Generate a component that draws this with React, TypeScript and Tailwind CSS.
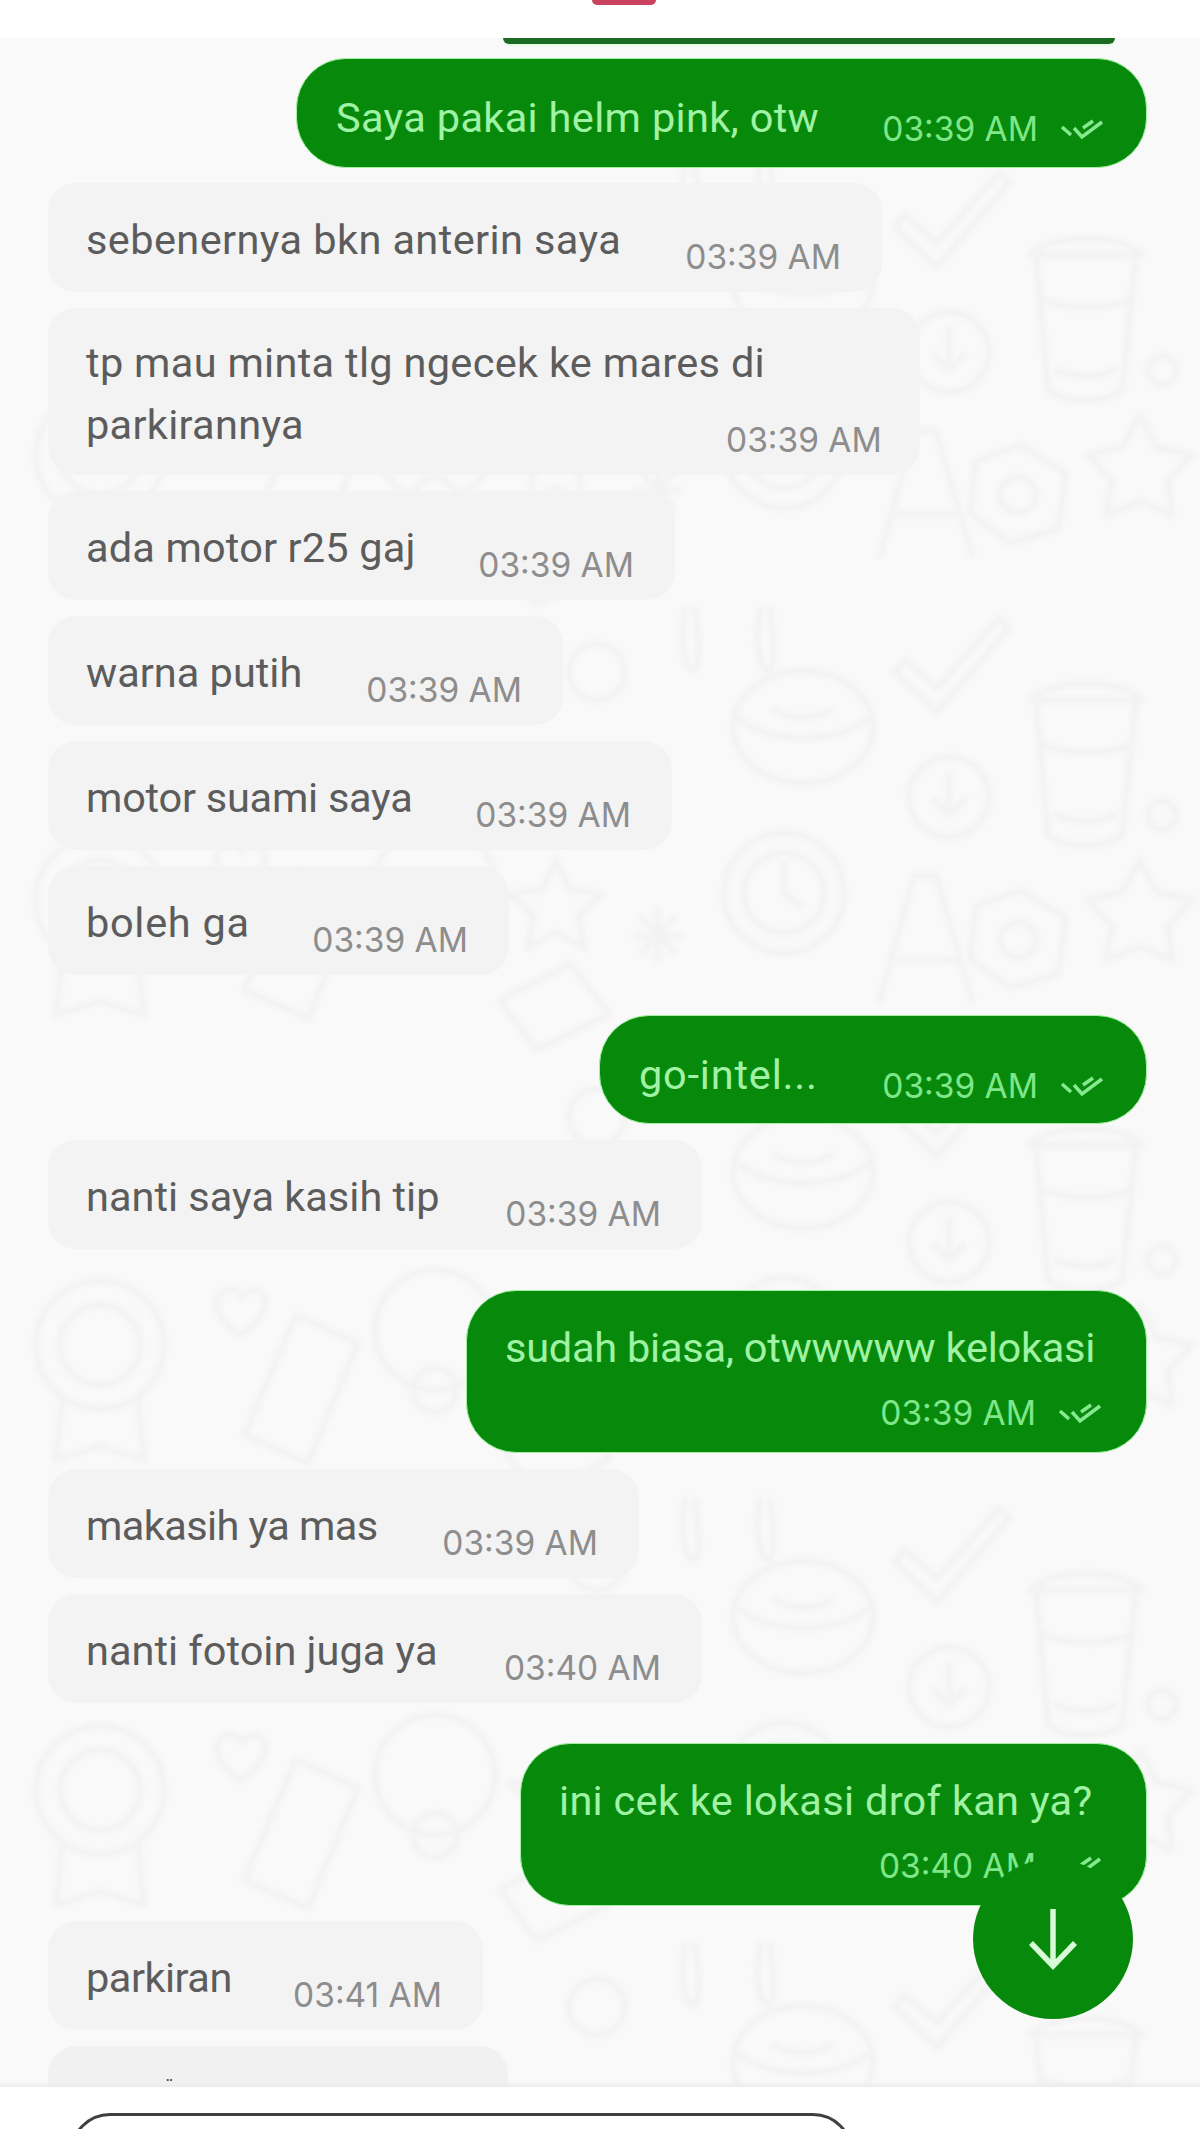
type Msg = {
  text: string;
  time: string;
  mine?: boolean;
  box: string; // width, height and top margin
  fit?: string; // per message text tweaks
  stacked?: boolean;
};

const messages: Msg[] = [
  { text: "Saya pakai helm pink, otw", time: "03:39 AM", mine: true, fit: "tracking-[0.33px]", box: "w-[851px] h-[110px] mt-[14px]" },
  { text: "sebenernya bkn anterin saya", time: "03:39 AM", fit: "tracking-[0.4px]", box: "w-[834px] h-[109px] mt-[15px]" },
  { text: "tp mau minta tlg ngecek ke mares di\nparkirannya", time: "03:39 AM", fit: "w-[640px] shrink-0 tracking-[0.3px]", box: "w-[872px] h-[167px] mt-[16px]" },
  { text: "ada motor r25 gaj", time: "03:39 AM", fit: "tracking-[0.15px]", box: "w-[627px] h-[109px] mt-[16px]" },
  { text: "warna putih", time: "03:39 AM", box: "w-[515px] h-[109px] mt-[16px]" },
  { text: "motor suami saya", time: "03:39 AM", fit: "tracking-[-0.25px]", box: "w-[624px] h-[109px] mt-[16px]" },
  { text: "boleh ga", time: "03:39 AM", fit: "tracking-[0.7px]", box: "w-[461px] h-[109px] mt-[16px]" },
  { text: "go-intel...", time: "03:39 AM", mine: true, fit: "tracking-[0.8px]", box: "w-[548px] h-[109px] mt-[40px]" },
  { text: "nanti saya kasih tip", time: "03:39 AM", box: "w-[654px] h-[109px] mt-[16px]" },
  { text: "sudah biasa, otwwwww kelokasi", time: "03:39 AM", mine: true, stacked: true, fit: "tracking-[-0.23px]", box: "w-[681px] h-[163px] mt-[41px]" },
  { text: "makasih ya mas", time: "03:39 AM", fit: "tracking-[-0.58px]", box: "w-[591px] h-[109px] mt-[16px]" },
  { text: "nanti fotoin juga ya", time: "03:40 AM", box: "w-[654px] h-[109px] mt-[16px]" },
  { text: "ini cek ke lokasi drof kan ya?", time: "03:40 AM", mine: true, stacked: true, fit: "tracking-[0.3px]", box: "w-[627px] h-[163px] mt-[40px]" },
  { text: "parkiran", time: "03:41 AM", fit: "tracking-[-0.5px]", box: "w-[435px] h-[109px] mt-[15px]" },
];

function Checks() {
  return (
    <svg viewBox="0 0 44 24" className="w-[44px] h-[24px] shrink-0" fill="none" stroke="#86e98f" strokeWidth="3.5">
      <path d="M2 10l9 8M14 11l8 9L42 5M23 11l10-7" />
    </svg>
  );
}

function Bubble({ m }: { m: Msg }) {
  if (m.mine) {
    return (
      <div
        className={`${m.box} self-end rounded-[50px] bg-[#078a0c] border border-[#a4f2a4] text-[#a0f2a4] font-['Roboto',sans-serif] ${
          m.stacked ? "flex flex-col pt-[33px] pl-[38px] pr-[44px]" : "flex items-center justify-between pl-[39px] pr-[42px]"
        }`}
      >
        <span className={`text-[41.5px] leading-[48px] ${m.fit ?? ""} ${m.stacked ? "" : "mt-[6px] -mb-[4px]"}`}>{m.text}</span>
        <span className={`flex items-center gap-[22px] ${m.stacked ? "self-end mt-[22px]" : "mt-[32px]"}`}>
          <span className="font-['Inter',sans-serif] text-[33.5px] leading-[38px] text-[#7fe68a]">{m.time}</span>
          <Checks />
        </span>
      </div>
    );
  }
  return (
    <div className={`${m.box} self-start rounded-[28px] bg-[#f3f3f3] flex items-center justify-between pl-[38px] pr-[41px] font-['Roboto',sans-serif]`}>
      <div className={`flex flex-col items-start text-[41.5px] leading-[62px] text-[#5c5c5c] mt-[4px] ${m.fit ?? ""}`}>
        {m.text.split("\n").map((line) => (
          <span key={line} className="whitespace-nowrap">
            {line}
          </span>
        ))}
      </div>
      <span className="font-['Inter',sans-serif] text-[33.5px] leading-[38px] text-[#8d8d8d] shrink-0 self-end mb-[16px]">{m.time}</span>
    </div>
  );
}

// one tile of the wallpaper, in page coordinates around y 600-1045
function DoodleTile({ dy }: { dy: number }) {
  return (
    <g transform={`translate(0 ${dy})`}>
      {/* medal */}
      <circle cx="100" cy="900" r="64" />
      <circle cx="100" cy="900" r="40" />
      <path d="M62 955l-6 60 44-14 44 14-6-60" />
      {/* phone and heart */}
      <path d="M296 870l62 28-50 120-64-28z" />
      <path d="M240 890c-30-20-28-44-10-46 6 0 10 4 12 8 4-6 10-8 16-6 14 6 8 28-18 44z" />
      {/* circles */}
      <circle cx="435" cy="885" r="60" />
      <circle cx="435" cy="945" r="22" />
      <circle cx="597" cy="672" r="28" />
      {/* star, envelope, burst */}
      <path d="M556 860l14 30 32 4-24 22 6 32-28-16-28 16 6-32-24-22 32-4z" />
      <path d="M500 1000l70-36 40 50-74 36z" />
      <path d="M658 910v50M636 936h44M642 918l32 34M674 918l-32 34" />
      {/* cups */}
      <path d="M685 610c-6 30 0 60 8 60s6-30 2-60M760 610c-6 30 0 60 8 60s6-30 2-60" />
      {/* donut */}
      <ellipse cx="803" cy="727" rx="70" ry="56" />
      <path d="M740 720c30 24 96 24 126 0M775 710c16 10 40 10 56 0" />
      {/* stopwatch */}
      <circle cx="784" cy="893" r="60" />
      <circle cx="784" cy="893" r="40" />
      <path d="M784 865v28l16 12" />
      {/* check */}
      <path d="M895 672l42 40 72-84-10-10-62 70-32-28z" />
      {/* arrow coin */}
      <circle cx="949" cy="797" r="40" />
      <path d="M949 775v40M934 800l15 15 15-15" />
      {/* drink cup */}
      <path d="M1036 700h100l-14 135c-20 14-56 14-74 0zM1030 700c20-22 92-22 112 0M1044 745c26 10 62 10 86 0M1056 815c18 8 42 8 58 0" />
      <circle cx="1162" cy="815" r="14" />
      {/* letters */}
      <path d="M880 1000l34-124h22l36 124" />
      <path d="M898 960h56" />
      <path d="M1020 890l46 28-8 56-48 14-40-30 6-52z" />
      <circle cx="1018" cy="940" r="18" />
      <path d="M1140 860l16 32 36 8-24 26 4 34-32-14-34 14 6-34-24-26 34-8z" />
    </g>
  );
}

function Wallpaper() {
  return (
    <svg
      className="absolute left-0 top-0 w-[1200px] h-[2050px] blur-[2px]"
      viewBox="0 38 1200 2050"
      fill="none"
      stroke="#f2f2f2"
      strokeWidth="6"
      strokeLinejoin="round"
      strokeLinecap="round"
    >
      {[-445, 0, 445, 890, 1335].map((dy) => (
        <DoodleTile key={dy} dy={dy} />
      ))}
    </svg>
  );
}

export default function App() {
  return (
    <div className="h-[2129px] w-[1200px] overflow-hidden flex flex-col bg-white">
      {/* top bar, only the bottom edge of it is in frame */}
      <div className="h-[38px] shrink-0 bg-white">
        <div className="ml-[592px] h-[5px] w-[64px] rounded-b-full bg-[#c9435f]" />
      </div>

      <div className="relative flex-1 overflow-hidden bg-[#f9f9f9]">
        <Wallpaper />
        <div className="relative flex flex-col pl-[48px] pr-[53px]">
          <div className="self-end mr-[32px] w-[612px] h-[6px] rounded-b-[6px] bg-[#1c6b22] shadow-[0_2px_0_#e6fbe6]" />
          {messages.map((m, i) => (
            <Bubble key={i} m={m} />
          ))}
          <div className="self-start mt-[16px] w-[460px] h-[60px] rounded-t-[28px] bg-[#f1f1f1] pl-[118px] pt-[28px] text-[12px] font-bold leading-[12px] text-[#444]">
            ··
          </div>
        </div>

        <button
          type="button"
          className="absolute left-[973px] top-[1821px] w-[160px] h-[160px] rounded-full bg-[#078a0c] flex items-center justify-center"
        >
          <svg viewBox="0 0 50 61" className="w-[50px] h-[61px]" fill="none" stroke="#d6fbd6" strokeWidth="5.5">
            <path d="M25 0v57M3 34l22 23 22-23" />
          </svg>
        </button>

        <div className="absolute inset-x-0 bottom-0 h-[6px] bg-gradient-to-b from-transparent to-[#ececec]" />
      </div>

      <div className="h-[42px] shrink-0 bg-white pl-[70px] pt-[26px]">
        <div className="w-[783px] h-[80px] rounded-[40px] border-[3px] border-[#3f3f3f]" />
      </div>
    </div>
  );
}
